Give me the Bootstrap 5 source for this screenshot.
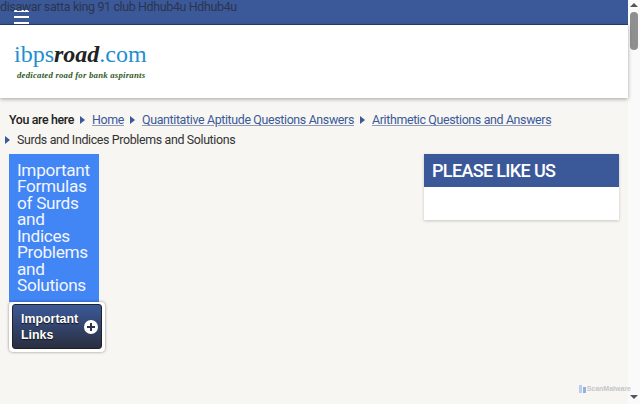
<!DOCTYPE html>
<html lang="en">

<head>
  <meta charset="UTF-8" />
  <meta name="viewport" content="width=device-width, initial-scale=1" />
  <title>Surds and Indices Problems and Solutions</title>
  <link href="https://cdn.jsdelivr.net/npm/bootstrap@5.3.0/dist/css/bootstrap.min.css" rel="stylesheet" />
  <style>
    html, body { height: 404px; overflow: hidden; }
    body { background: #f7f6f2; color: #333; font-family: Roboto, sans-serif; font-size: 12.4px; letter-spacing: -.35px; }
    .shell { height: 404px; }
    .page-area { width: 628px; position: relative; }
    .spam-line { position: absolute; top: -1px; left: 0; font-size: 12.5px; line-height: 15px; letter-spacing: -.38px; color: #2b3550; white-space: nowrap; z-index: 3; }
    .top-strip { height: 25px; background: #3b5998; border-bottom: 1px solid #2a3f6e; padding-left: 14px; }
    .burger { width: 15px; gap: 4px; padding-top: 10px; }
    .burger span { display: block; height: 2px; background: #fff; }
    .logo-band { height: 73px; background: #fff; box-shadow: 0 1px 4px rgba(0,0,0,.35); padding: 16px 0 0 14px; }
    .logo-main { font-family: "Liberation Serif", serif; font-size: 24px; line-height: 26px; color: #1f8fd0; letter-spacing: 0; }
    .logo-main b { color: #222; font-style: italic; font-weight: 700; }
    .logo-sub { font-family: "Liberation Serif", serif; font-size: 8.8px; line-height: 10px; font-weight: 700; font-style: italic; color: #2f5a1e; padding: 3px 0 0 3px; letter-spacing: .2px; }
    .crumbs { padding: 12px 0 0 9px; line-height: 20px; }
    .crumbs a { color: #3b5998; text-decoration-color: #8c9cbf; }
    .crumb-head { font-weight: 500; color: #222; }
    .tri { display: inline-block; width: 0; height: 0; margin-right: 1px; border-left: 5px solid #3b5998; border-top: 4px solid transparent; border-bottom: 4px solid transparent; }
    .crumb-row1 { gap: 6px; }
    .crumb-row2 { padding-left: 5px; gap: 6px; margin-left: -9px; }
    .body-row { padding: 4px 9px 0 9px; }
    .side-col { width: 96px; }
    .side-title { width: 90px; height: 148px; background: #4285f4; color: #f2f6fe; font-size: 17.2px; font-weight: 400; line-height: 16.45px; letter-spacing: -.3px; padding: 8px 8px; margin: 0; }
    .links-box { background: #fff; border-radius: 4px; padding: 2px 3px 3px; box-shadow: 0 0 3px rgba(0,0,0,.45); }
    .links-btn { height: 45px; background: linear-gradient(#3b5998, #2a2f40); border: 1px solid #222; border-radius: 3px; color: #fff; font-family: "Liberation Sans", sans-serif; font-weight: 700; font-size: 12.4px; letter-spacing: 0; line-height: 16px; padding: 0 3px 0 8px; text-shadow: 0 1px 1px #111; }
    .plus-dot { width: 14px; height: 14px; flex: none; }
    .like-box { width: 195px; background: #fff; box-shadow: 0 1px 3px rgba(0,0,0,.2); }
    .like-head { background: #3b5998; color: #fff; font-size: 18px; font-weight: 500; letter-spacing: -.65px; line-height: 33px; padding-left: 8px; margin: 0; }
    .like-body { height: 33px; }
    .scan-mark { position: absolute; right: -3px; bottom: 10px; font-family: "Liberation Sans", sans-serif; font-size: 7px; letter-spacing: 0; font-weight: 700; color: #c3c6cb; line-height: 10px; gap: 1px; }
    .fake-scroll { width: 12px; background: #fafafa; }
    .arrow-up { width: 0; height: 0; border-left: 4px solid transparent; border-right: 4px solid transparent; border-bottom: 4px solid #555; margin: 3px auto 0; }
    .thumb { width: 8px; height: 38px; background: #8f8f8f; border-radius: 4px; margin: 5px auto 0; }
    .arrow-down { width: 0; height: 0; border-left: 4px solid transparent; border-right: 4px solid transparent; border-top: 4px solid #555; margin: auto auto 5px; }
  </style>
</head>

<body>
  <div class="shell d-flex">
    <div class="page-area">
      <div class="spam-line">disawar satta king 91 club Hdhub4u Hdhub4u</div>
      <div class="top-strip">
        <div class="burger d-flex flex-column"><span></span><span></span><span></span></div>
      </div>
      <div class="logo-band">
        <div class="logo-main">ibps<b>road</b>.com</div>
        <div class="logo-sub">dedicated road for bank aspirants</div>
      </div>
      <div class="crumbs">
        <div class="crumb-row1 d-flex align-items-center">
          <span class="crumb-head">You are here</span><i class="tri"></i>
          <a href="#">Home</a><i class="tri"></i>
          <a href="#">Quantitative Aptitude Questions Answers</a><i class="tri"></i>
          <a href="#">Arithmetic Questions and Answers</a>
        </div>
        <div class="crumb-row2 d-flex align-items-center"><i class="tri"></i><span>Surds and Indices Problems and Solutions</span></div>
      </div>
      <div class="body-row d-flex justify-content-between align-items-start">
        <div class="side-col">
          <h1 class="side-title">Important Formulas of Surds and Indices Problems and Solutions</h1>
          <div class="links-box">
            <div class="links-btn d-flex align-items-center justify-content-between">
              <span>Important<br>Links</span>
              <svg class="plus-dot" viewBox="0 0 14 14"><circle cx="7" cy="7" r="7" fill="#fff"/><path d="M7 3v8M3 7h8" stroke="#2d3350" stroke-width="2"/></svg>
            </div>
          </div>
        </div>
        <div class="like-box">
          <h2 class="like-head">PLEASE LIKE US</h2>
          <div class="like-body"></div>
        </div>
      </div>
      <div class="scan-mark d-flex align-items-center">
        <svg width="7" height="8" viewBox="0 0 7 8"><path d="M0 0h3v8H0z" fill="#b9cdec"/><path d="M4 2h3v6H4z" fill="#8fb0e0"/></svg>ScanMalware
      </div>
    </div>
    <div class="fake-scroll d-flex flex-column">
      <div class="arrow-up"></div>
      <div class="thumb"></div>
      <div class="arrow-down"></div>
    </div>
  </div>
  <script src="https://cdn.jsdelivr.net/npm/bootstrap@5.3.0/dist/js/bootstrap.bundle.min.js"></script>
</body>

</html>
